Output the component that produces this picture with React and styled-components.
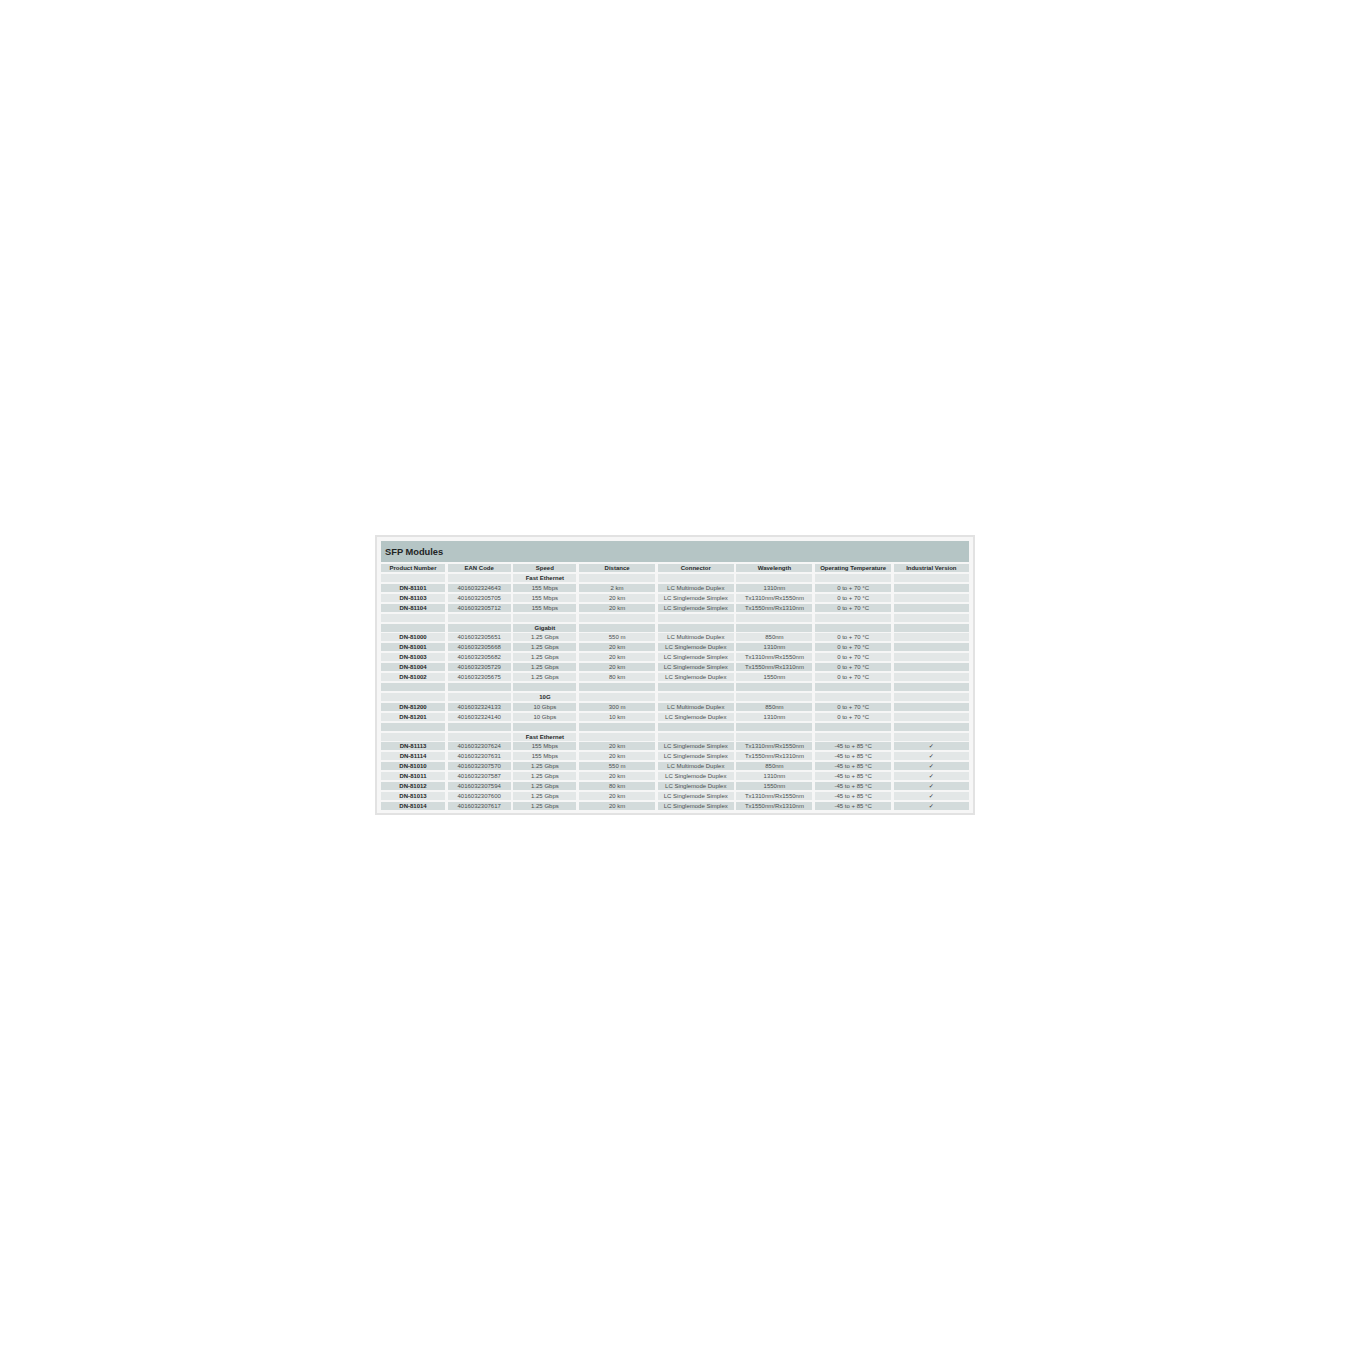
import React from 'react';
import styled, { createGlobalStyle } from 'styled-components';

const GlobalStyle = createGlobalStyle`
  html, body {
    margin: 0;
    padding: 0;
    background: #ffffff;
  }
  body {
    font-family: "Liberation Sans", Arial, Helvetica, sans-serif;
  }
`;

const columns = [
  'Product Number',
  'EAN Code',
  'Speed',
  'Distance',
  'Connector',
  'Wavelength',
  'Operating Temperature',
  'Industrial Version',
];

// section rows have only a label, blank rows are null
const rows = [
  { section: 'Fast Ethernet' },
  ['DN-81101', '4016032324643', '155 Mbps', '2 km', 'LC Multimode Duplex', '1310nm', '0 to + 70 °C', ''],
  ['DN-81103', '4016032305705', '155 Mbps', '20 km', 'LC Singlemode Simplex', 'Tx1310nm/Rx1550nm', '0 to + 70 °C', ''],
  ['DN-81104', '4016032305712', '155 Mbps', '20 km', 'LC Singlemode Simplex', 'Tx1550nm/Rx1310nm', '0 to + 70 °C', ''],
  null,
  { section: 'Gigabit' },
  ['DN-81000', '4016032305651', '1.25 Gbps', '550 m', 'LC Multimode Duplex', '850nm', '0 to + 70 °C', ''],
  ['DN-81001', '4016032305668', '1.25 Gbps', '20 km', 'LC Singlemode Duplex', '1310nm', '0 to + 70 °C', ''],
  ['DN-81003', '4016032305682', '1.25 Gbps', '20 km', 'LC Singlemode Simplex', 'Tx1310nm/Rx1550nm', '0 to + 70 °C', ''],
  ['DN-81004', '4016032305729', '1.25 Gbps', '20 km', 'LC Singlemode Simplex', 'Tx1550nm/Rx1310nm', '0 to + 70 °C', ''],
  ['DN-81002', '4016032305675', '1.25 Gbps', '80 km', 'LC Singlemode Duplex', '1550nm', '0 to + 70 °C', ''],
  null,
  { section: '10G' },
  ['DN-81200', '4016032324133', '10 Gbps', '300 m', 'LC Multimode Duplex', '850nm', '0 to + 70 °C', ''],
  ['DN-81201', '4016032324140', '10 Gbps', '10 km', 'LC Singlemode Duplex', '1310nm', '0 to + 70 °C', ''],
  null,
  { section: 'Fast Ethernet' },
  ['DN-81113', '4016032307624', '155 Mbps', '20 km', 'LC Singlemode Simplex', 'Tx1310nm/Rx1550nm', '-45 to + 85 °C', '✓'],
  ['DN-81114', '4016032307631', '155 Mbps', '20 km', 'LC Singlemode Simplex', 'Tx1550nm/Rx1310nm', '-45 to + 85 °C', '✓'],
  ['DN-81010', '4016032307570', '1.25 Gbps', '550 m', 'LC Multimode Duplex', '850nm', '-45 to + 85 °C', '✓'],
  ['DN-81011', '4016032307587', '1.25 Gbps', '20 km', 'LC Singlemode Duplex', '1310nm', '-45 to + 85 °C', '✓'],
  ['DN-81012', '4016032307594', '1.25 Gbps', '80 km', 'LC Singlemode Duplex', '1550nm', '-45 to + 85 °C', '✓'],
  ['DN-81013', '4016032307600', '1.25 Gbps', '20 km', 'LC Singlemode Simplex', 'Tx1310nm/Rx1550nm', '-45 to + 85 °C', '✓'],
  ['DN-81014', '4016032307617', '1.25 Gbps', '20 km', 'LC Singlemode Simplex', 'Tx1550nm/Rx1310nm', '-45 to + 85 °C', '✓'],
];

const Page = styled.div`
  width: 1350px;
  height: 1350px;
  display: flex;
  align-items: center;
  justify-content: center;
`;

const Frame = styled.div`
  width: 588px;
  border: 2px solid #e2e2e2;
  background: #f6f6f6;
  padding: 4px 4px 3px 4px;
`;

const TitleBar = styled.div`
  height: 21px;
  background: #b5c5c5;
  display: flex;
  align-items: center;
  padding-left: 4px;
  font-size: 9.3px;
  font-weight: bold;
  color: #1f2424;
  margin-bottom: 2px;
`;

const Grid = styled.div`
  display: grid;
  grid-template-columns: 64px 63px 63px 76px 76px 76px 76px 75px;
  grid-auto-rows: 8px;
  column-gap: 2.7px;
  row-gap: 1.92px;
`;

const Cell = styled.div`
  background: ${p => (p.$dark ? '#d3dbdb' : '#e3e7e7')};
  display: flex;
  align-items: center;
  justify-content: center;
  font-size: 6px;
  line-height: 8px;
  white-space: nowrap;
  overflow: hidden;
  color: ${p => (p.$bold ? '#262929' : '#4a4f4f')};
  font-weight: ${p => (p.$bold ? 'bold' : 'normal')};
`;

const Check = styled.span`
  font-family: "DejaVu Sans", sans-serif;
  font-size: 6px;
  color: #2a2d2d;
`;

export default function App() {
  return (
    <Page>
      <GlobalStyle />
      <Frame>
        <TitleBar>SFP Modules</TitleBar>
        <Grid>
          {columns.map(c => (
            <Cell key={c} $dark $bold>{c}</Cell>
          ))}
          {rows.map((row, i) => {
            const dark = (i + 1) % 2 === 0;
            if (row === null) {
              return columns.map((c, j) => <Cell key={`${i}-${j}`} $dark={dark} />);
            }
            if (row.section) {
              return columns.map((c, j) => (
                <Cell key={`${i}-${j}`} $dark={dark} $bold>{j === 2 ? row.section : ''}</Cell>
              ));
            }
            return row.map((v, j) => (
              <Cell key={`${i}-${j}`} $dark={dark} $bold={j === 0}>
                {j === 7 && v ? <Check>{v}</Check> : v}
              </Cell>
            ));
          })}
        </Grid>
      </Frame>
    </Page>
  );
}
